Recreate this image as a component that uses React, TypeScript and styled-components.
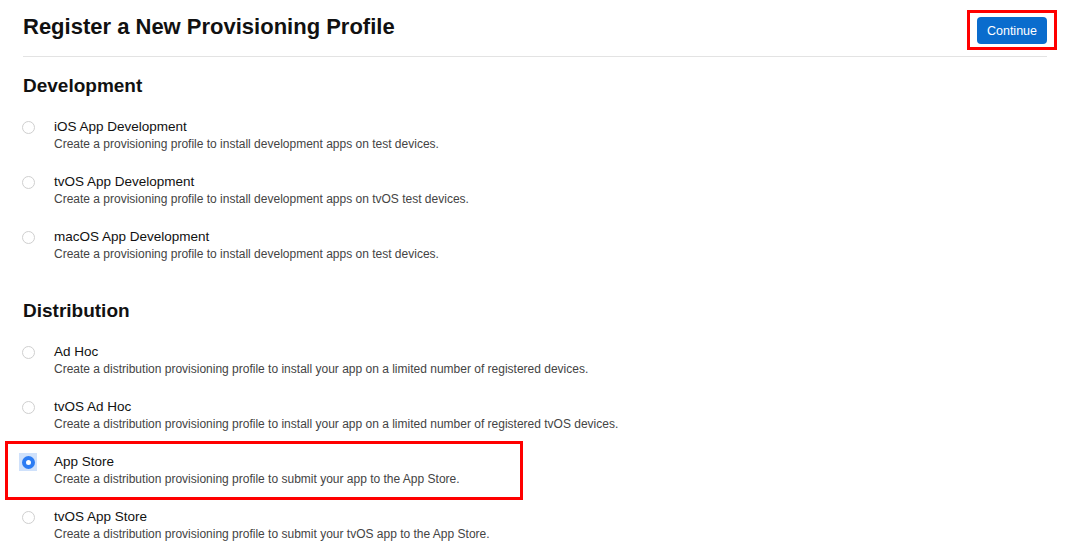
import React, { useState } from 'react';
import styled, { createGlobalStyle } from 'styled-components';

const GlobalStyle = createGlobalStyle`
  html, body {
    margin: 0;
    padding: 0;
    background: #fff;
  }
  body {
    font-family: "Liberation Sans", Arial, sans-serif;
    color: #1d1d1f;
  }
`;

const Page = styled.div`
  width: 1024px;
  padding: 0 0 0 23px;
`;

const Header = styled.header`
  display: flex;
  align-items: flex-start;
  justify-content: space-between;
  height: 56px;
  border-bottom: 1px solid #e3e3e3;
`;

const Title = styled.h1`
  margin: 14px 0 0;
  font-size: 22px;
  line-height: 26px;
  font-weight: 700;
  color: #111;
`;

const Highlight = styled.div<{ $inset: string }>`
  position: relative;
  &::after {
    content: '';
    position: absolute;
    inset: ${({ $inset }) => $inset};
    border: 3px solid #f00;
    pointer-events: none;
  }
`;

const ButtonSlot = styled(Highlight)`
  margin-top: 17px;
`;

const ContinueButton = styled.button`
  display: block;
  height: 27px;
  width: 70px;
  padding: 0;
  border: none;
  border-radius: 4px;
  background: #0a6ccd;
  color: #fff;
  font-family: inherit;
  font-size: 12.5px;
  cursor: pointer;
`;

const Section = styled.section<{ $top: number }>`
  margin-top: ${({ $top }) => $top}px;
`;

const SectionTitle = styled.h2`
  margin: 0 0 22px;
  font-size: 19px;
  line-height: 22px;
  font-weight: 700;
  color: #111;
`;

const List = styled.div`
  display: flex;
  flex-direction: column;
  gap: 22px;
`;

const Row = styled.label`
  display: grid;
  grid-template-columns: 32px 1fr;
  align-items: start;
  margin-left: -1px;
  cursor: pointer;
`;

const RadioBox = styled.span<{ $checked: boolean }>`
  display: flex;
  align-items: center;
  justify-content: center;
  width: 18px;
  height: 18px;
  margin: -1px 0 0 -3px;
  background: ${({ $checked }) => ($checked ? '#cfe1fb' : 'transparent')};
`;

const RadioDot = styled.span<{ $checked: boolean }>`
  box-sizing: border-box;
  width: 13px;
  height: 13px;
  border-radius: 50%;
  border: ${({ $checked }) => ($checked ? '4px solid #2c7cf3' : '1px solid #cfcfcf')};
  background: #fff;
`;

const RowText = styled.div`
  display: flex;
  flex-direction: column;
  gap: 1px;
`;

const RowLabel = styled.span`
  font-size: 13.5px;
  line-height: 16px;
  color: #111;
`;

const RowDesc = styled.span`
  font-size: 12px;
  line-height: 16px;
  color: #444;
`;

type Option = { id: string; label: string; desc: string };

const development: Option[] = [
  { id: 'ios-dev', label: 'iOS App Development', desc: 'Create a provisioning profile to install development apps on test devices.' },
  { id: 'tvos-dev', label: 'tvOS App Development', desc: 'Create a provisioning profile to install development apps on tvOS test devices.' },
  { id: 'macos-dev', label: 'macOS App Development', desc: 'Create a provisioning profile to install development apps on test devices.' },
];

const distribution: Option[] = [
  { id: 'adhoc', label: 'Ad Hoc', desc: 'Create a distribution provisioning profile to install your app on a limited number of registered devices.' },
  { id: 'tvos-adhoc', label: 'tvOS Ad Hoc', desc: 'Create a distribution provisioning profile to install your app on a limited number of registered tvOS devices.' },
  { id: 'appstore', label: 'App Store', desc: 'Create a distribution provisioning profile to submit your app to the App Store.' },
  { id: 'tvos-appstore', label: 'tvOS App Store', desc: 'Create a distribution provisioning profile to submit your tvOS app to the App Store.' },
];

const OptionRow: React.FC<{ option: Option; checked: boolean; onSelect: () => void }> = ({ option, checked, onSelect }) => (
  <Row onClick={onSelect}>
    <RadioBox $checked={checked}>
      <RadioDot $checked={checked} />
    </RadioBox>
    <RowText>
      <RowLabel>{option.label}</RowLabel>
      <RowDesc>{option.desc}</RowDesc>
    </RowText>
  </Row>
);

const App: React.FC = () => {
  const [selected, setSelected] = useState('appstore');

  const renderOption = (o: Option) => {
    const row = <OptionRow key={o.id} option={o} checked={selected === o.id} onSelect={() => setSelected(o.id)} />;
    if (o.id === 'appstore') {
      return (
        <Highlight key={o.id} $inset="-13px 524px -13px -18px">
          {row}
        </Highlight>
      );
    }
    return row;
  };

  return (
    <>
      <GlobalStyle />
      <Page>
        <Header>
          <Title>Register a New Provisioning Profile</Title>
          <ButtonSlot $inset="-7px -10px -6px -10px">
            <ContinueButton>Continue</ContinueButton>
          </ButtonSlot>
        </Header>
        <Section $top={18}>
          <SectionTitle>Development</SectionTitle>
          <List>{development.map(renderOption)}</List>
        </Section>
        <Section $top={38}>
          <SectionTitle>Distribution</SectionTitle>
          <List>{distribution.map(renderOption)}</List>
        </Section>
      </Page>
    </>
  );
};

export default App;
